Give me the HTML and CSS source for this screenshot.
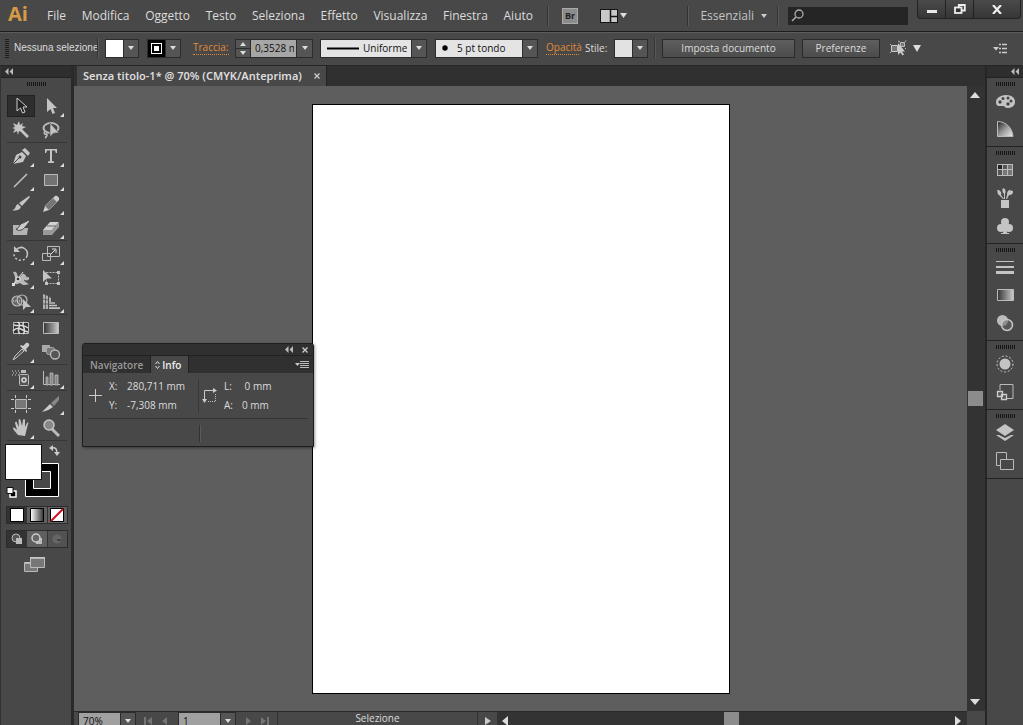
FILE: index.html
```html
<!DOCTYPE html>
<html lang="it">
<head>
<meta charset="utf-8">
<title>Senza titolo-1 - Illustrator</title>
<link rel="stylesheet" href="styles.css">
</head>
<body>
<header class="menubar">
  <span class="logo">Ai</span>
  <nav class="menus">
    <button>File</button><button>Modifica</button><button>Oggetto</button><button>Testo</button><button>Seleziona</button><button>Effetto</button><button>Visualizza</button><button>Finestra</button><button>Aiuto</button>
  </nav>
  <span class="vsep"></span>
  <button class="bridge">Br</button>
  <button class="arrange" aria-label="Disponi documenti">
    <svg width="28" height="14" viewBox="0 0 28 14"><rect x=".5" y=".5" width="17" height="13" fill="#c8c8c8" stroke="#151515"/><path d="M10.500 1v12M11 7.500h6" stroke="#151515" stroke-width="1.500"/><path d="M20 4h7l-3.500 5z" fill="#ddd"/></svg>
  </button>
  <span class="spacer"></span>
  <span class="vsep"></span>
  <button class="workspace">Essenziali <svg width="6" height="4" viewBox="0 0 6 4"><path d="M0 0h6L3 4z" fill="#ccc"/></svg></button>
  <span class="vsep"></span>
  <label class="search"><svg width="13" height="13" viewBox="0 0 13 13"><circle cx="8" cy="5" r="4" fill="none" stroke="#aaa" stroke-width="1.300"/><path d="M5 8L1 12" stroke="#aaa" stroke-width="1.600"/></svg><input type="search" aria-label="Cerca"></label>
  <div class="window-buttons">
    <button aria-label="Riduci"><svg width="10" height="10" viewBox="0 0 10 10"><path d="M0 6h10v3H0z" fill="#e8e8e8"/></svg></button>
    <button aria-label="Ripristina"><svg width="12" height="10" viewBox="0 0 12 10"><path d="M4.800 3V1h6v5.500H8" fill="none" stroke="#eee" stroke-width="1.800"/><rect x="1" y="3.500" width="6.500" height="5.500" fill="#333" stroke="#eee" stroke-width="1.800"/></svg></button>
    <button aria-label="Chiudi"><svg width="10" height="9" viewBox="0 0 10 9"><path d="M1 0l8 9M9 0L1 9" stroke="#eee" stroke-width="2.200"/></svg></button>
  </div>
</header>

<section class="controlbar">
  <span class="vgrip"></span>
  <span class="status-text">Nessuna selezione</span>
  <span class="vsep"></span>
  <button class="picker fill" aria-label="Riempimento"><span class="chip white"></span><span class="arrow"></span></button>
  <button class="picker stroke" aria-label="Traccia"><span class="chip ring"></span><span class="arrow"></span></button>
  <label class="orange weight-label" for="weight">Traccia:</label>
  <div class="weight">
    <span class="spin"><button class="up" aria-label="Aumenta"></button><button class="down" aria-label="Diminuisci"></button></span>
    <input id="weight" value="0,3528 mm"><button class="arrow" aria-label="Valori"></button>
  </div>
  <label class="combo profile"><svg width="32" height="3" viewBox="0 0 32 3"><path d="M0 .5h32v2H0z"/></svg><select aria-label="Profilo"><option>Uniforme</option></select><span class="arrow"></span></label>
  <label class="combo brush"><svg width="6" height="6" viewBox="0 0 6 6"><circle cx="3" cy="3" r="2.700"/></svg><select aria-label="Pennello"><option>5 pt tondo</option></select><span class="arrow"></span></label>
  <a class="orange opacity" href="#opacita">Opacità</a>
  <span class="style-label">Stile:</span>
  <button class="picker style" aria-label="Stile"><span class="chip pale"></span><span class="arrow"></span></button>
  <span class="vsep"></span>
  <button class="push setup">Imposta documento</button>
  <button class="push prefs">Preferenze</button>
  <button class="similar" aria-label="Seleziona oggetti simili"><svg width="31" height="16" viewBox="0 0 31 16"><path d="M1.500 5.500h6v6h-6z" fill="#777" stroke="#ccc"/><path d="M10.500 2.500h4v4h-4z" fill="#777" stroke="#bbb"/><path d="M0 4l1 1M0 13l1-1M8 1l2 1M16 .5L15 2M16 9l-1-1" stroke="#bbb"/><path d="M8 3v12l2.500-2.500 2 3 1.500-1-2-3h3z" fill="#ccc"/><path d="M23 5h8l-4 7z" fill="#ddd"/></svg></button>
  <span class="spacer"></span>
  <button class="bar-menu" aria-label="Menu"><svg width="15" height="11" viewBox="0 0 15 11"><path d="M0 4h6L3 7.500z" fill="#ccc"/><path d="M6 1.500h2M6 5.500h2M6 9.500h2M9 1.500h5M9 5.500h5M9 9.500h5" stroke="#ccc" stroke-width="1.500"/></svg></button>
</section>

<main class="workarea">
<aside class="toolbox">
  <div class="dock-head"><svg width="8" height="7" viewBox="0 0 8 7"><path d="M3.500 0v7L0 3.500zM8 0v7L4.500 3.500z" fill="#bbb"/></svg></div>
  <div class="grip"><i></i></div>
  <div class="tools">
    <div class="group">
      <button class="on" aria-label="Selezione"><svg class="ic" viewBox="0 0 22 22"><path d="M7 3v13l3.500-3 2 5 2.500-1-2-5h4z" fill="#222" stroke="#ccc"/></svg></button>
      <button class="more" aria-label="Selezione diretta"><svg class="ic" viewBox="0 0 22 22"><path d="M7 3v14l3.500-3 2 5 2.500-1-2-5h4z" fill="#c4c4c4"/></svg></button>
      <button aria-label="Bacchetta magica"><svg class="ic" viewBox="0 0 22 22"><path d="M9 2l1 4 3-2-1 3 4 1-4 2 1 1 6 6-2 2-6-6-2-1-1 4-1-4-4 2 2-4-3-1 3-1-2-4 4 2z" fill="#c4c4c4"/></svg></button>
      <button aria-label="Lazo"><svg class="ic" viewBox="0 0 22 22"><ellipse cx="11" cy="9" rx="7.500" ry="5" fill="none" stroke="#bbb" stroke-width="2"/><path d="M6 12c-3 1-2 4 0 3s1 3-1 4" fill="none" stroke="#bbb" stroke-width="1.500"/><path d="M10 4v14l3.500-4H19z" fill="#c4c4c4" stroke="#484848" stroke-width=".6"/></svg></button>
    </div>
    <div class="group">
      <button class="more" aria-label="Penna"><svg class="ic" viewBox="0 0 22 22"><path d="M3 19l3-9 6-3 4 4-3 6z" fill="#c4c4c4"/><path d="M12 5l3-2 5 5-2 3z" fill="#c4c4c4"/><path d="M3 19l6-6" stroke="#484848"/><circle cx="10" cy="12" r="1.500" fill="#444"/></svg></button>
      <button class="more" aria-label="Testo"><svg class="ic" viewBox="0 0 22 22"><path d="M5 4h12v4h-1.200L15 5.500h-3V16l2 .5V18H8v-1.500l2-.5V5.500H7L6.200 8H5z" fill="#c4c4c4"/></svg></button>
      <button class="more" aria-label="Linea"><svg class="ic" viewBox="0 0 22 22"><path d="M4 18L17 5" stroke="#c4c4c4" stroke-width="1.500"/></svg></button>
      <button class="more" aria-label="Rettangolo"><svg class="ic" viewBox="0 0 22 22"><path d="M4.500 5.500h13v11h-13z" fill="#737373" stroke="#bbb"/></svg></button>
      <button aria-label="Pennello"><svg class="ic" viewBox="0 0 22 22"><path d="M19 3l1 1-8 9-3-3zM8 11l3 3c-2 4-6 4-9 3 4 0 3-5 6-6z" fill="#c4c4c4"/></svg></button>
      <button class="more" aria-label="Matita"><svg class="ic" viewBox="0 0 22 22"><path d="M3 19l2-6 4 4z" fill="#ccc"/><path d="M5 13l8-8 4 4-8 8z" fill="#757575" stroke="#aaa" stroke-width=".7"/><path d="M13 5l2-2c2-1 5 2 4 4l-2 2z" fill="#ccc"/></svg></button>
      <button aria-label="Pennello chiazza"><svg class="ic" viewBox="0 0 22 22"><path d="M3 8h6l2 3 7 0-1 7H3z" fill="#b4b4b4"/><path d="M6 12c3 0 3-5 7-6l6-3 1 1-4 5c-3 4-7 6-10 3z" fill="#ccc" stroke="#444"/></svg></button>
      <button class="more" aria-label="Gomma"><svg class="ic" viewBox="0 0 22 22"><path d="M3 13l7-8h9l-7 8z" fill="#d0d0d0"/><path d="M3 13h9v5H3zM12 13l7-8v5l-7 8z" fill="#999"/><path d="M7 9h9" stroke="#666"/></svg></button>
    </div>
    <div class="group">
      <button class="more" aria-label="Ruota"><svg class="ic" viewBox="0 0 22 22"><path d="M6 7c6-6 13 0 11 6" fill="none" stroke="#c4c4c4" stroke-width="1.500"/><path d="M17 13c-2 7-14 5-13-3" fill="none" stroke="#c4c4c4" stroke-width="1.500" stroke-dasharray="2 2"/><path d="M4 3v6h6z" fill="#c4c4c4"/></svg></button>
      <button class="more" aria-label="Scala"><svg class="ic" viewBox="0 0 22 22"><path d="M7.500 3.500h12v10h-12zM2.500 10.500h8v7h-8z" fill="none" stroke="#bbb"/><path d="M11 11l4-4M12 6h4v4" fill="none" stroke="#ddd"/></svg></button>
      <button class="more" aria-label="Larghezza"><svg class="ic" viewBox="0 0 22 22"><path d="M3 5c3-1 4 0 5 5 4 1 3-4 6-3s1 4 5 3c1 3-2 4-4 3s-1 2 4 4c-4 2-7 1-9-1-2 1-4 2-6 0 2-4 1-7-1-11z" fill="#b8b8b8"/><path d="M3 18L13 5" stroke="#ddd"/><path d="M2 16h3v3H2z" fill="#ddd"/><circle cx="8" cy="12" r="2" fill="#333" stroke="#eee"/></svg></button>
      <button aria-label="Trasformazione libera"><svg class="ic" viewBox="0 0 22 22"><path d="M6.500 5.500h12v11h-12z" fill="none" stroke="#bbb" stroke-dasharray="2 1"/><path d="M17 4h3v3h-3zM5 15h3v3H5zM17 15h3v3h-3zM3 3v12l3.500-3.500H12z" fill="#c4c4c4"/></svg></button>
      <button class="more" aria-label="Crea forme"><svg class="ic" viewBox="0 0 22 22"><circle cx="7" cy="10" r="5" fill="#666" stroke="#bbb" stroke-width="1.200"/><circle cx="12" cy="9" r="5" fill="none" stroke="#bbb" stroke-width="1.200"/><path d="M3 10h10" stroke="#ddd" stroke-dasharray="1 1"/><path d="M13 8v11l3-3h5z" fill="#c4c4c4"/></svg></button>
      <button class="more" aria-label="Griglia prospettica"><svg class="ic" viewBox="0 0 22 22"><path d="M3 3l5 2v13H3zM9 6l2 1v4H9z" fill="#b0b0b0"/><path d="M5.500 3v15M3 8l5 1M3 13h5" stroke="#444" stroke-width=".7" fill="none"/><path d="M9 12h6M9 14.500h8M9 17.200h11" stroke="#c0c0c0" stroke-width="1.700"/></svg></button>
    </div>
    <div class="group">
      <button aria-label="Trama"><svg class="ic" viewBox="0 0 22 22"><path d="M3.500 5.500h15v11h-15z" fill="#333" stroke="#bbb"/><path d="M4 8c7 2 8-2 14 3M3 14c6-6 9 0 15 1M8 5c5 4-3 7 2 12M14 5c-4 3 4 8-1 12" stroke="#ddd" fill="none" stroke-width="1.500"/></svg></button>
      <button aria-label="Sfumatura"><svg class="ic" viewBox="0 0 22 22"><defs><linearGradient id="g1"><stop stop-color="#333"/><stop offset="1" stop-color="#ccc"/></linearGradient></defs><path d="M3.500 5.500h15v11h-15z" fill="url(#g1)" stroke="#bbb"/></svg></button>
      <button class="more" aria-label="Contagocce"><svg class="ic" viewBox="0 0 22 22"><path d="M13 5l3-3c2-1 4 1 3 3l-3 3 1 2-1 1-6-6 1-1z" fill="#ccc"/><path d="M12 8l2 2-8 7-3 2 2-4z" fill="#555" stroke="#c4c4c4"/></svg></button>
      <button aria-label="Fusione"><svg class="ic" viewBox="0 0 22 22"><path d="M2 4h8v7H2z" fill="#aaa"/><rect x="6.500" y="6.500" width="8" height="7" rx="2" fill="#777" stroke="#aaa"/><circle cx="15" cy="13.500" r="4.500" fill="#555" stroke="#bbb" stroke-width="1.300"/></svg></button>
    </div>
    <div class="group">
      <button class="more" aria-label="Bomboletta simboli"><svg class="ic" viewBox="0 0 22 22"><path d="M2 4h8M3 6h7M2 8h7" stroke="#ccc" stroke-dasharray="1 2"/><path d="M11 3h5v3h-5z" fill="#bbb"/><rect x="9.500" y="7.500" width="9" height="11" rx="1" fill="#555" stroke="#bbb"/><circle cx="14" cy="13" r="2" fill="none" stroke="#ddd" stroke-width="1.500"/></svg></button>
      <button class="more" aria-label="Grafico"><svg class="ic" viewBox="0 0 22 22"><path d="M3.500 4v13.500H20" stroke="#bbb" fill="none"/><path d="M6 10h2v8H6zM10 6h3v12h-3zM15 8h3v10h-3z" fill="#888" stroke="#bbb" stroke-width=".8"/></svg></button>
    </div>
    <div class="group">
      <button aria-label="Tavola da disegno"><svg class="ic" viewBox="0 0 22 22"><path d="M5.500 6.500h11v9h-11z" fill="#777" stroke="#bbb"/><path d="M5.500 2v3M16.500 2v3M5.500 17v3M16.500 17v3M1 6.500h3M18 6.500h3M1 15.500h3M18 15.500h3" stroke="#ccc"/></svg></button>
      <button class="more" aria-label="Sezione"><svg class="ic" viewBox="0 0 22 22"><path d="M2 19l8-8 3 3c-3 2-6 4-11 5z" fill="#ccc"/><path d="M11 10l8-7v4l-5 6z" fill="#888"/></svg></button>
      <button class="more" aria-label="Mano"><svg class="ic" viewBox="0 0 22 22"><path d="M8 18c-2-3-5-5-5-7 1-1 2 0 4 2L5 6c0-1 2-2 2 0l2 4-.5-7c0-1 2-1 2 0L12 9l1-6c0-1 2-1 2 0v7l2-4c1-1 2 0 1 1l-2 8-1 4z" fill="#c4c4c4"/></svg></button>
      <button aria-label="Zoom"><svg class="ic" viewBox="0 0 22 22"><path d="M12 12l7 7" stroke="#bbb" stroke-width="3"/><circle cx="9" cy="8" r="5" fill="#888" stroke="#c4c4c4" stroke-width="1.500"/></svg></button>
    </div>
  </div>
  <div class="colors">
    <svg width="62" height="59" viewBox="0 1 62 59"><path d="M20.500 22.500h33v33h-33z" fill="#000" stroke="#fff"/><path d="M28.500 30.500h17v17h-17z" fill="#484848" stroke="#fff"/><path d="M.5 3.500h36v35h-36z" fill="#fff" stroke="#111"/><path d="M46 7c5-1 6 1 6 6" fill="none" stroke="#ccc" stroke-width="1.500"/><path d="M48 4v6l-4-3zM49 11h6l-3 4z" fill="#ccc"/><path d="M5 50h6v6H5z" fill="#000" stroke="#fff" stroke-width="1.500"/><path d="M2 46.500h6v6H2z" fill="#fff" stroke="#111"/></svg>
  </div>
  <div class="trio"><button class="on" aria-label="Colore"><svg width="14" height="14"><path d="M.5.500h13v13H.5z" fill="#fff" stroke="#000"/></svg></button><button aria-label="Sfumatura"><svg width="14" height="14"><defs><linearGradient id="g2"><stop stop-color="#fff"/><stop offset="1" stop-color="#333"/></linearGradient></defs><path d="M.5.500h13v13H.5z" fill="url(#g2)" stroke="#000"/></svg></button><button aria-label="Nessuno"><svg width="14" height="14"><path d="M.5.500h13v13H.5z" fill="#fff" stroke="#000"/><path d="M1 13L13 1" stroke="#d01020" stroke-width="2"/></svg></button></div>
  <div class="trio modes"><button class="on" aria-label="Disegno normale"><svg width="12" height="12"><circle cx="5" cy="5" r="4" fill="#555" stroke="#bbb"/><path d="M5 5h6v6H5z" fill="#bbb"/></svg></button><button aria-label="Disegna dietro"><svg width="12" height="12"><path d="M5 5h6v6H5z" fill="#bbb"/><circle cx="5" cy="5" r="4" fill="#666" stroke="#ccc" stroke-width="1.500"/></svg></button><button aria-label="Disegna dentro" disabled><svg width="12" height="12"><circle cx="6" cy="6" r="4.500" fill="#666"/><path d="M6 6h4v2H6z" fill="#444"/></svg></button></div>
  <button class="screenmode" aria-label="Modalità schermo"><svg width="22" height="17" viewBox="0 0 22 17"><path d="M.5 6.500h13v9H.5z" fill="#777" stroke="#bbb"/><path d="M6.500 1.500h14v10h-14z" fill="#777" stroke="#bbb"/><path d="M6 2h15M1 7h5" stroke="#ccc" stroke-width="1.500"/></svg></button>
</aside>

<section class="document">
  <div class="tabs"><div class="tab"><span>Senza titolo-1* @ 70% (CMYK/Anteprima)</span><button aria-label="Chiudi documento"><svg width="6" height="6" viewBox="0 0 6 6"><path d="M.5.500l5 5M5.500.500l-5 5" stroke="#ccc" stroke-width="1.300"/></svg></button></div></div>
  <div class="viewport">
    <div class="canvas"><div class="artboard"></div></div>
    <div class="vscroll"><svg width="10" height="6"><path d="M5 0l5 6H0z" fill="#ddd"/></svg><span class="thumb"></span><svg width="10" height="6"><path d="M0 0h10L5 6z" fill="#ddd"/></svg></div>
    <footer class="bottom">
      <div class="bottom-row">
        <div class="field zoomf"><input value="70%" aria-label="Zoom"><button class="arrow" aria-label="Livelli di zoom"></button></div>
        <button class="nav" disabled aria-label="Prima"><svg width="8" height="8"><path d="M0 0h2v8H0zM8 0v8L3 4z" fill="#747474"/></svg></button>
        <button class="nav" disabled aria-label="Precedente"><svg width="5" height="8"><path d="M5 0v8L0 4z" fill="#747474"/></svg></button>
        <div class="field page"><input value="1" aria-label="Tavola"><button class="arrow" aria-label="Tavole"></button></div>
        <button class="nav" disabled aria-label="Successiva"><svg width="5" height="8"><path d="M0 0v8l5-4z" fill="#747474"/></svg></button>
        <button class="nav last" disabled aria-label="Ultima"><svg width="8" height="8"><path d="M6 0h2v8H6zM0 0v8l5-4z" fill="#747474"/></svg></button>
        <span class="current">Selezione</span>
        <button class="flyout" aria-label="Mostra"><svg width="6" height="8"><path d="M0 0v8l6-4z" fill="#ccc"/></svg></button>
        <div class="hscroll"><svg width="6" height="10"><path d="M6 0v10L0 5z" fill="#ddd"/></svg><span class="thumb"></span><svg width="6" height="10"><path d="M0 0v10l6-5z" fill="#ddd"/></svg></div>
      </div>
    </footer>
    <div class="corner"></div>
  </div>
</section>

<aside class="dock">
  <div class="dock-head"><svg width="8" height="7" viewBox="0 0 8 7"><path d="M3.500 0v7L0 3.500zM8 0v7L4.500 3.500z" fill="#bbb"/></svg></div>
  <div class="dgroup"><div class="grip"><i></i></div>
    <button aria-label="Colore"><svg class="ic" viewBox="0 0 22 22"><path d="M2 12c0-4 5-7 10-7 6 0 9 3 9 7 0 5-5 6-8 6-2 0-2-2-4-2-3 0-7 1-7-4z" fill="#c4c4c4"/><g fill="#444"><circle cx="6" cy="12" r="1.700"/><circle cx="9" cy="8.500" r="1.500"/><circle cx="14" cy="8" r="1.500"/><circle cx="17" cy="11" r="1.500"/><circle cx="14" cy="14" r="1.700"/></g></svg></button>
    <button aria-label="Guida colori"><svg class="ic" viewBox="0 0 22 22"><defs><linearGradient id="g3" x1="0" y1="0" x2="1" y2="1"><stop stop-color="#222"/><stop offset=".5" stop-color="#999"/><stop offset="1" stop-color="#eee"/></linearGradient></defs><path d="M3.500 3.500c9 0 15 7 15.500 15H3.500z" fill="url(#g3)" stroke="#bbb"/></svg></button></div>
  <div class="dgroup"><div class="grip"><i></i></div>
    <button aria-label="Campioni"><svg class="ic" viewBox="0 0 22 22"><path d="M3 5h16v12H3z" fill="#bbb"/><path d="M4 6h4v4H4z" fill="#222"/><path d="M9 6h4v4H9zM4 11h4v5H4z" fill="#555"/><path d="M14 6h4v4h-4zM9 11h4v5H9zM14 11h4v5h-4z" fill="#777"/></svg></button>
    <button aria-label="Pennelli"><svg class="ic" viewBox="0 0 22 22"><path d="M7 13h8v8H7zM3 3c3 0 5 2 4 5l3 4H9L5 8C3 7 4 5 3 3zM9 1c3 1 3 4 2 6v5h-1V7C8 5 8 3 9 1zM19 4l-4-1c-2 2-2 3-2 5l-1 4h1l2-4c3 0 4-1 4-4z" fill="#c4c4c4"/></svg></button>
    <button aria-label="Simboli"><svg class="ic" viewBox="0 0 22 22"><circle cx="11" cy="7" r="4" fill="#c4c4c4"/><circle cx="7" cy="13" r="4" fill="#c4c4c4"/><circle cx="15" cy="13" r="4" fill="#c4c4c4"/><path d="M10 9h2l1 9h2v1H7v-1h2z" fill="#c4c4c4"/></svg></button></div>
  <div class="dgroup"><div class="grip"><i></i></div>
    <button aria-label="Traccia"><svg class="ic" viewBox="0 0 22 22"><path d="M2 5h18v1H2zM2 10h18v2H2zM2 15h18v3H2z" fill="#c4c4c4"/></svg></button>
    <button aria-label="Sfumatura"><svg class="ic" viewBox="0 0 22 22"><path d="M3.500 5.500h16v11h-16z" fill="url(#g1)" stroke="#bbb"/></svg></button>
    <button aria-label="Trasparenza"><svg class="ic" viewBox="0 0 22 22"><circle cx="8.500" cy="8.500" r="5.500" fill="#bbb"/><circle cx="13" cy="13" r="5.500" fill="#6668" stroke="#c4c4c4" stroke-width="1.500"/></svg></button></div>
  <div class="dgroup"><div class="grip"><i></i></div>
    <button aria-label="Aspetto"><svg class="ic" viewBox="0 0 22 22"><circle cx="11" cy="11" r="5.500" fill="#c4c4c4"/><circle cx="11" cy="11" r="8" fill="none" stroke="#ccc" stroke-dasharray="2 1.800"/></svg></button>
    <button aria-label="Stili grafica"><svg class="ic" viewBox="0 0 22 22"><path d="M6 9V3.500h13v14h-7" fill="none" stroke="#bbb"/><path d="M3.500 10.500h5v5h-5zM7.500 13.500h5v5h-5z" fill="#555" stroke="#ccc" stroke-width="1.300"/></svg></button></div>
  <div class="dgroup"><div class="grip"><i></i></div>
    <button aria-label="Livelli"><svg class="ic" viewBox="0 0 22 22"><path d="M11 2l9 6-9 6-9-6zM2 13h3l6 3 6-3h3l-9 6z" fill="#c4c4c4"/></svg></button>
    <button aria-label="Tavole da disegno"><svg class="ic" viewBox="0 0 22 22"><path d="M2.500 2.500h10v13h-10z" fill="#484848" stroke="#bbb"/><path d="M6.500 9.500h13v10h-13z" fill="#484848" stroke="#bbb"/></svg></button></div>
</aside>

<section class="info">
  <div class="info-head"><svg width="8" height="7" viewBox="0 0 8 7"><path d="M3.500 0v7L0 3.500zM8 0v7L4.500 3.500z" fill="#bbb"/></svg><svg width="6" height="6" viewBox="0 0 6 6"><path d="M.5.500l5 5M5.500.500l-5 5" stroke="#ccc" stroke-width="1.300"/></svg></div>
  <div class="info-tabs"><button>Navigatore</button><button class="on"><svg width="5" height="8" viewBox="0 0 5 8"><path d="M.5 3l2-2.500L4.500 3M.5 5l2 2.500L4.500 5" fill="none" stroke="#ddd"/></svg>Info</button><span class="spacer"></span><svg width="14" height="8" viewBox="0 0 14 8"><path d="M0 2h5L2.500 5z" fill="#ccc"/><path d="M5 .5h9M5 2.500h9M5 4.500h9M5 6.500h9" stroke="#bbb"/></svg></div>
  <div class="info-body">
    <div class="cell"><svg width="14" height="14" viewBox="0 0 14 14"><path d="M7.500 0v13M1 6.500h13" stroke="#ccc"/></svg><dl><dt>X:</dt><dd>280,711 mm</dd><dt>Y:</dt><dd>-7,308 mm</dd></dl></div>
    <div class="cell size"><svg width="15" height="15" viewBox="0 0 15 15"><path d="M2.500 13V2.500H13" fill="none" stroke="#ccc"/><path d="M11 0l4 2.500L11 5zM0 11h5l-2.500 4z" fill="#ccc"/><path d="M13.500 6v7.500H6" fill="none" stroke="#bbb" stroke-dasharray="1 1"/></svg><dl><dt>L:</dt><dd>&nbsp;0 mm</dd><dt>A:</dt><dd>0 mm</dd></dl></div>
  </div>
  <div class="info-foot"><span class="vsep"></span></div>
</section>
</main>
</body>
</html>
```
FILE: styles.css
```css
* { box-sizing: border-box; }
body {
  margin: 0; height: 100vh; overflow: hidden;
  display: flex; flex-direction: column;
  background: #484848; color: #dcdcdc;
  font: 10px/14px "Open Sans", "Noto Sans", sans-serif;
}
button, input, select { font: inherit; color: inherit; margin: 0; padding: 0; border: 0; background: none; border-radius: 0; outline: 0; }
button { display: flex; align-items: center; justify-content: center; white-space: nowrap; }
select { appearance: none; }
svg { display: block; flex: none; }
.spacer { flex: 1; }
.vsep { width: 2px; height: 20px; flex: none; background: #333; border-right: 1px solid #5a5a5a; }
.ic { width: 22px; height: 22px; }

.menubar { height: 32px; flex: none; display: flex; align-items: center; border-bottom: 1px solid #1e1e1e; font-size: 12px; }
.logo { width: 38px; padding-left: 8px; font: bold 20px/26px "Open Sans", sans-serif; color: #d79a45; height: 30px; }
.menus { display: flex; justify-content: space-between; width: 486px; margin: 0 14px 0 9px; }
.bridge { width: 16px; height: 16px; margin: 0 22px 0 13px; background: #8c8c8c; border: 1px solid #aaa; color: #222; font-size: 9px; font-weight: bold; }
.workspace { gap: 7px; margin: 0 10px 0 11px; color: #c4c4c4; }
.search { width: 120px; height: 18px; margin: 0 9px; background: #252525; display: flex; align-items: center; padding-left: 3px; }
.search input { flex: 1; min-width: 0; }
.window-buttons { display: flex; align-self: flex-start; margin-right: 2px; border: 1px solid #222; border-top: 0; border-radius: 0 0 4px 4px; background: linear-gradient(#4a4a4a, #363636); }
.window-buttons button { width: 28px; height: 18px; border-right: 1px solid #222; }
.window-buttons button:last-child { width: 46px; border: 0; }

.controlbar { height: 34px; flex: none; display: flex; align-items: center; padding-bottom: 2px; border-top: 1px solid #5c5c5c; border-bottom: 1px solid #262626; }
.vgrip { width: 4px; height: 19px; margin: 0 5px; background: repeating-linear-gradient(#1c1c1c 0 1px, #484848 1px 2px); }
.status-text { width: 83px; white-space: nowrap; font-family: "Liberation Sans", sans-serif; }
.arrow { width: 15px; align-self: stretch; background: #555; border-left: 1px solid #2c2c2c; display: flex; align-items: center; justify-content: center; flex: none; }
.arrow::after { content: ""; border: 3px solid transparent; border-top: 4px solid #ddd; border-bottom: 0; }
.picker, .weight, .combo { height: 19px; border: 1px solid #2c2c2c; display: flex; align-items: stretch; flex: none; }
.picker { width: 34px; }
.chip { flex: 1; align-self: stretch; }
.white { background: #fff; }
.pale { background: #e2e2e2; }
.ring { background: #fff; border: 3px solid #000; box-shadow: inset 0 0 0 1px #fff, inset 0 0 0 3px #000; }
.fill { margin: 0 8px 0 6px; }
.stroke { margin-right: 12px; }
.orange { color: #e08a3c; border-bottom: 1px dotted #e08a3c; line-height: 13px; text-decoration: none; white-space: nowrap; }
.weight-label { width: 36px; margin-right: 6px; }
.weight { width: 78px; margin-right: 7px; }
.spin { width: 15px; display: flex; flex-direction: column; border-right: 1px solid #2c2c2c; background: #555; }
.spin button { flex: 1; }
.spin .up { border-bottom: 1px solid #2c2c2c; }
.up::after, .down::after { content: ""; border: 3px solid transparent; }
.up::after { border-bottom: 4px solid #ddd; border-top: 0; }
.down::after { border-top: 4px solid #ddd; border-bottom: 0; }
.weight input { flex: 1; min-width: 0; padding: 0 2px 0 4px; background: #a6a6a6; color: #111; }
.weight .arrow { width: 16px; }
.combo { background: #e4e4e4; color: #111; align-items: center; padding-left: 6px; }
.combo select { flex: 1; min-width: 0; }
.profile { width: 107px; margin-right: 8px; gap: 4px; }
.brush { width: 103px; margin-right: 8px; gap: 9px; }
.opacity { width: 33px; margin-right: 6px; }
.style-label { width: 29px; }
.style { margin-right: 6px; }
.push { height: 19px; border: 1px solid #2a2a2a; background: linear-gradient(#5e5e5e, #4c4c4c); }
.setup { width: 133px; margin: 0 7px 0 6px; }
.prefs { width: 78px; margin-right: 10px; }
.bar-menu { margin-right: 15px; }

.workarea { flex: 1; min-height: 0; display: flex; position: relative; }
.dock-head { height: 12px; background: #2e2e2e; display: flex; align-items: center; padding: 0 4px; border-bottom: 1px solid #222; }
.grip { display: flex; justify-content: center; }
.grip i { width: 19px; height: 4px; background: repeating-linear-gradient(90deg, #161616 0 1px, #484848 1px 2px); }
.toolbox { width: 74px; flex: none; border-right: 3px solid #2a2a2a; border-left: 1px solid #333; }
.toolbox .grip { height: 16px; padding-top: 4px; }
.tools { padding: 0 4px 0 6px; }
.group { display: grid; grid-template-columns: 30px 30px; grid-auto-rows: 24px; border-bottom: 1px solid #363636; margin-bottom: 1px; }
.group button { position: relative; width: 28px; height: 22px; place-self: center start; }
.group .on { background: #2e2e2e; border: 1px solid #222; }
.more::after { content: ""; position: absolute; right: 1px; bottom: 0; border: 2px solid transparent; border-right-color: #ddd; border-bottom-color: #ddd; }
.colors { padding: 0 4px; }
.trio { display: flex; width: 62px; margin: 5px 0 6px 5px; border: 1px solid #2c2c2c; }
.trio button { flex: 1; height: 16px; background: #606060; border-right: 1px solid #333; }
.trio button:last-child { border: 0; }
.trio .on { background: #333; }
.trio button:disabled { background: #525252; }
.screenmode { margin: 8px 23px; }

.document { flex: 1; min-width: 0; display: flex; flex-direction: column; }
.tabs { height: 20px; flex: none; background: #303030; padding-left: 3px; display: flex; }
.tab { display: flex; align-items: center; gap: 12px; padding: 0 6px; background: #484848; border-right: 1px solid #222; font: 600 11px/14px "Noto Sans", sans-serif; white-space: nowrap; }
.viewport { flex: 1; min-height: 0; display: grid; grid-template: minmax(0, 1fr) 14px / minmax(0, 1fr) 18px; }
.canvas { background: #5e5e5e; display: flex; align-items: center; justify-content: center; }
.artboard { width: 418px; aspect-ratio: 418 / 590; flex: none; background: #fff; border: 1px solid #000; }
.vscroll { background: #333; display: flex; flex-direction: column; justify-content: space-between; align-items: center; padding: 6px 2px 6px 0; }
.vscroll .thumb { width: 15px; height: 15px; background: #8c8c8c; }
.bottom { overflow: hidden; border-top: 1px solid #2a2a2a; background: #484848; }
.bottom-row { display: flex; align-items: center; height: 17px; }
.field { display: flex; height: 17px; width: 58px; border: 1px solid #2c2c2c; }
.field input { flex: 1; min-width: 0; padding-left: 4px; background: #a0a0a0; color: #111; }
.zoomf { margin: 0 8px 0 4px; }
.nav { margin-right: 10px; }
.last { margin-right: 8px; }
.page { margin-left: 1px; margin-right: 10px; }
.current { width: 201px; align-self: flex-start; line-height: 13px; text-align: center; border-left: 1px solid #333; border-right: 1px solid #333; }
.flyout { width: 19px; }
.hscroll { flex: 1; height: 17px; background: #333; display: flex; align-items: center; justify-content: space-between; padding: 0 6px 0 5px; }
.hscroll .thumb { width: 15px; height: 17px; background: #8c8c8c; }

.dock { width: 38px; flex: none; border-left: 2px solid #262626; }
.dock .dock-head { justify-content: flex-end; }
.dgroup { padding-bottom: 3px; border-bottom: 1px solid #222; }
.dgroup .grip { height: 9px; padding-top: 4px; }
.dgroup button { width: 100%; height: 28px; }

.info { position: absolute; left: 82px; top: 277px; width: 232px; background: #484848; border: 1px solid #1e1e1e; border-radius: 3px 3px 0 0; box-shadow: 1px 1px 3px #0006; }
.info-head { height: 12px; background: #303030; display: flex; align-items: center; justify-content: flex-end; gap: 9px; padding-right: 5px; border-bottom: 1px solid #222; }
.info-tabs { height: 17px; background: #303030; display: flex; align-items: center; padding-right: 4px; font-weight: 600; }
.info-tabs button { height: 17px; padding: 0 7px; color: #999; border-right: 1px solid #222; gap: 2px; }
.info-tabs .on { background: #484848; color: #eee; padding: 0 7px 0 4px; }
.info-body { display: flex; height: 46px; margin: 0 5px; border-bottom: 1px solid #333; }
.cell { display: flex; align-items: center; width: 111px; }
.size { border-left: 1px solid #383838; height: 34px; align-self: center; padding-left: 3px; }
dl { margin: 0; padding-left: 7px; display: grid; grid-template-columns: 18px auto; row-gap: 5px; white-space: nowrap; }
dd { margin: 0; }
.info-foot { height: 27px; padding: 6px 0 0 116px; }
.info-foot .vsep { display: block; height: 17px; }
```
